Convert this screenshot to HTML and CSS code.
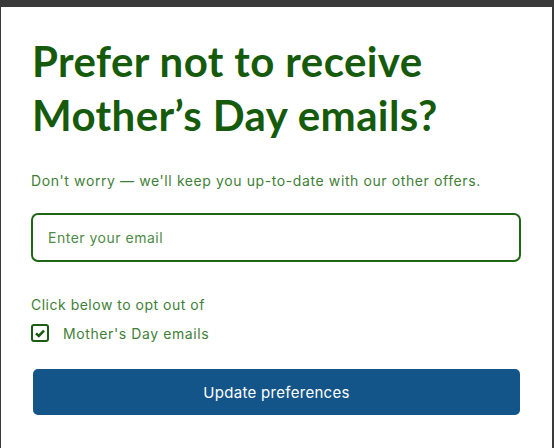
FILE: index.html
```html
<!DOCTYPE html>
<html>
<head>
<meta charset="utf-8">
<link rel="stylesheet" href="styles.css">
</head>
<body>
<div class="panel">
  <h1 class="title">Prefer not to receive<br>Mother’s Day emails?</h1>
  <p class="lead">Don't worry — we'll keep you up-to-date with our other offers.</p>
  <div class="field"><span class="placeholder">Enter your email</span></div>
  <p class="note">Click below to opt out of</p>
  <div class="check-row">
    <span class="box"><svg width="10" height="9" viewBox="0 0 10 9"><path d="M1 4.4 L3.8 7 L9 1.6" fill="none" stroke="#1a5c12" stroke-width="2.6"/></svg></span>
    <span class="check-label">Mother's Day emails</span>
  </div>
  <div class="button">Update preferences</div>
</div>
</body>
</html>
```
FILE: styles.css
```css
html, body {
  margin: 0;
  height: 100%;
}
body {
  background: #3a3a3a;
  padding: 7px 2px 0 1px;
  box-sizing: border-box;
}
.panel {
  background: #fff;
  height: 441px;
  box-sizing: border-box;
  padding: 27px 31px 0 30px;
}
.title {
  margin: 0;
  font-family: Lato, sans-serif;
  font-weight: 700;
  font-size: 42px;
  line-height: 54px;
  letter-spacing: 0.4px;
  color: #165a0b;
  padding-left: 1px;
}
.lead {
  margin: 29px 0 0;
  font-family: Inter, sans-serif;
  font-size: 14px;
  line-height: 20px;
  letter-spacing: 0.6px;
  color: #3f7f38;
}
.field {
  margin-top: 22px;
  height: 49px;
  border: 2px solid #1e6614;
  border-radius: 7px;
  box-sizing: border-box;
  display: flex;
  align-items: center;
  padding-left: 15px;
}
.placeholder {
  font-family: Inter, sans-serif;
  font-size: 14px;
  letter-spacing: 0.5px;
  color: #4d8a46;
}
.note {
  margin: 33px 0 0;
  font-family: Inter, sans-serif;
  font-size: 14px;
  line-height: 20px;
  letter-spacing: 0.5px;
  color: #3f7f38;
}
.check-row {
  margin-top: 9px;
  display: flex;
  align-items: center;
}
.box {
  width: 18px;
  height: 18px;
  border: 2px solid #1a5c12;
  border-radius: 3px;
  box-sizing: border-box;
  display: flex;
  align-items: center;
  justify-content: center;
}
.check-label {
  margin-left: 14px;
  font-family: Inter, sans-serif;
  font-size: 14px;
  letter-spacing: 0.6px;
  color: #3f7f38;
}
.button {
  margin: 27px 1px 0 2px;
  height: 46px;
  background: #135589;
  border-radius: 5px;
  display: flex;
  align-items: center;
  justify-content: center;
  font-family: Inter, sans-serif;
  font-size: 15px;
  letter-spacing: 0.3px;
  color: #fff;
}
```
